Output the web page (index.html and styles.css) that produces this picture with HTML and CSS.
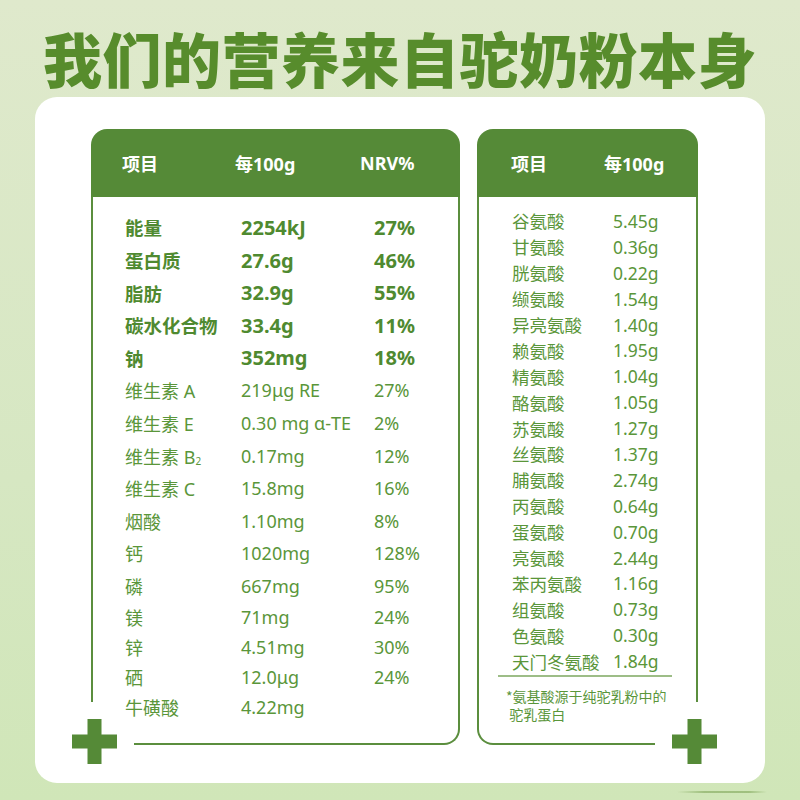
FILE: index.html
```html
<!DOCTYPE html>
<html lang="zh">
<head>
<meta charset="utf-8">
<link rel="stylesheet" href="styles.css">
</head>
<body>
<div class="page">
  <h1 class="title">我们的营养来自驼奶粉本身</h1>
  <div class="card">
    <div class="table left">
      <div class="thead">
        <span>项目</span><span>每100g</span><span>NRV%</span>
      </div>
      <div class="tbody">
        <div class="row b"><span>能量</span><span>2254kJ</span><span>27%</span></div>
        <div class="row b"><span>蛋白质</span><span>27.6g</span><span>46%</span></div>
        <div class="row b"><span>脂肪</span><span>32.9g</span><span>55%</span></div>
        <div class="row b"><span>碳水化合物</span><span>33.4g</span><span>11%</span></div>
        <div class="row b"><span>钠</span><span>352mg</span><span>18%</span></div>
        <div class="row"><span>维生素 A</span><span>219μg RE</span><span>27%</span></div>
        <div class="row"><span>维生素 E</span><span>0.30 mg α-TE</span><span>2%</span></div>
        <div class="row"><span>维生素 B<sub>2</sub></span><span>0.17mg</span><span>12%</span></div>
        <div class="row"><span>维生素 C</span><span>15.8mg</span><span>16%</span></div>
        <div class="row"><span>烟酸</span><span>1.10mg</span><span>8%</span></div>
        <div class="row"><span>钙</span><span>1020mg</span><span>128%</span></div>
        <div class="row"><span>磷</span><span>667mg</span><span>95%</span></div>
        <div class="row t"><span>镁</span><span>71mg</span><span>24%</span></div>
        <div class="row t"><span>锌</span><span>4.51mg</span><span>30%</span></div>
        <div class="row t"><span>硒</span><span>12.0μg</span><span>24%</span></div>
        <div class="row t"><span>牛磺酸</span><span>4.22mg</span><span></span></div>
      </div>
      <svg class="plus" viewBox="0 0 79 79" width="79" height="79"><rect width="79" height="79" fill="#fff"/><path d="M32.5 17h14v15.5h15.5v14h-15.5v15.5h-14v-15.5h-15.5v-14h15.5z" fill="#558a37"/></svg>
    </div>
    <div class="table right">
      <div class="thead">
        <span>项目</span><span>每100g</span>
      </div>
      <div class="tbody">
        <div class="arow"><span>谷氨酸</span><span>5.45g</span></div>
        <div class="arow"><span>甘氨酸</span><span>0.36g</span></div>
        <div class="arow"><span>胱氨酸</span><span>0.22g</span></div>
        <div class="arow"><span>缬氨酸</span><span>1.54g</span></div>
        <div class="arow"><span>异亮氨酸</span><span>1.40g</span></div>
        <div class="arow"><span>赖氨酸</span><span>1.95g</span></div>
        <div class="arow"><span>精氨酸</span><span>1.04g</span></div>
        <div class="arow"><span>酪氨酸</span><span>1.05g</span></div>
        <div class="arow"><span>苏氨酸</span><span>1.27g</span></div>
        <div class="arow"><span>丝氨酸</span><span>1.37g</span></div>
        <div class="arow"><span>脯氨酸</span><span>2.74g</span></div>
        <div class="arow"><span>丙氨酸</span><span>0.64g</span></div>
        <div class="arow"><span>蛋氨酸</span><span>0.70g</span></div>
        <div class="arow"><span>亮氨酸</span><span>2.44g</span></div>
        <div class="arow"><span>苯丙氨酸</span><span>1.16g</span></div>
        <div class="arow"><span>组氨酸</span><span>0.73g</span></div>
        <div class="arow"><span>色氨酸</span><span>0.30g</span></div>
        <div class="arow"><span>天门冬氨酸</span><span>1.84g</span></div>
        <div class="sep"></div>
        <p class="note">*氨基酸源于纯驼乳粉中的<br>&nbsp;驼乳蛋白</p>
      </div>
      <svg class="plus" viewBox="0 0 79 79" width="79" height="79"><rect width="79" height="79" fill="#fff"/><path d="M32.5 17h14v15.5h15.5v14h-15.5v15.5h-14v-15.5h-15.5v-14h15.5z" fill="#558a37"/></svg>
    </div>
  </div>
  <div class="shadow"></div>
</div>
</body>
</html>
```

FILE: styles.css
```css
* { box-sizing: border-box; }
html, body { margin: 0; padding: 0; }
body {
  width: 800px;
  height: 800px;
  overflow: hidden;
  background: linear-gradient(180deg, #dfe9cc 0%, #d6e7c2 60%, #d0e6b8 100%);
  font-family: "Noto Sans", "Noto Sans CJK SC", sans-serif;
}
.page { width: 800px; height: 800px; }
.title {
  margin: 0;
  height: 97px;
  padding-top: 20px;
  line-height: 75px;
  text-align: center;
  font-family: "Noto Sans CJK SC", sans-serif;
  font-size: 59px;
  font-weight: 900;
  color: #578c2c;
  letter-spacing: 0.5px;
}
.card {
  margin-left: 35px;
  width: 730px;
  height: 686px;
  background: #fff;
  border-radius: 22px;
  padding: 32px 0 0 56px;
  display: flex;
  gap: 17px;
  align-items: flex-start;
}
.table { position: relative; }
.table.left { width: 369px; }
.table.right { width: 221px; }
.thead {
  height: 68px;
  background: #558a37;
  border-radius: 16px 16px 0 0;
  color: #fff;
  font-weight: 700;
  font-size: 18px;
  display: grid;
  align-items: center;
}
.left .thead { grid-template-columns: 113px 125px auto; padding-left: 31px; }
.right .thead { grid-template-columns: 93px auto; padding-left: 34px; }
.tbody {
  height: 548px;
  border: 2px solid #5b8e3e;
  border-top: none;
}
.left .tbody { border-bottom-right-radius: 16px; padding-top: 14.2px; }
.right .tbody { border-bottom-left-radius: 16px; padding-top: 11px; }
.row {
  position: relative;
  z-index: 1;
  display: grid;
  grid-template-columns: 116px 133px auto;
  padding-left: 32px;
  height: 32.6px;
  align-items: center;
  font-size: 18px;
  color: #5a963a;
  white-space: nowrap;
}
.row.t { height: 30px; }
.row.b { font-weight: 700; color: #4f8a30; font-size: 18.5px; }
.row.b span + span { font-size: 20px; }
.row sub { font-size: 10px; vertical-align: -1px; }
.arow {
  display: grid;
  grid-template-columns: 101px auto;
  padding-left: 33px;
  height: 25.9px;
  align-items: center;
  font-size: 17.5px;
  color: #5a963a;
  white-space: nowrap;
}
.sep {
  margin: 1px 0 0 19px;
  width: 174px;
  height: 2px;
  background: #9dbd87;
}
.note {
  margin: 10px 0 0 27px;
  font-family: "Noto Sans CJK SC", sans-serif;
  font-size: 14px;
  line-height: 18px;
  color: #5a963a;
}
.plus { position: absolute; top: 572.5px; display: block; z-index: 0; }
.left .plus { left: -36px; }
.right .plus { left: 178px; }
.shadow {
  margin: 8px 0 0 677px;
  width: 90px;
  height: 2px;
  background: linear-gradient(90deg, rgba(120,160,80,0), rgba(120,160,80,0.55) 30%, rgba(120,160,80,0.55) 80%, rgba(120,160,80,0));
  border-radius: 2px;
}
```
